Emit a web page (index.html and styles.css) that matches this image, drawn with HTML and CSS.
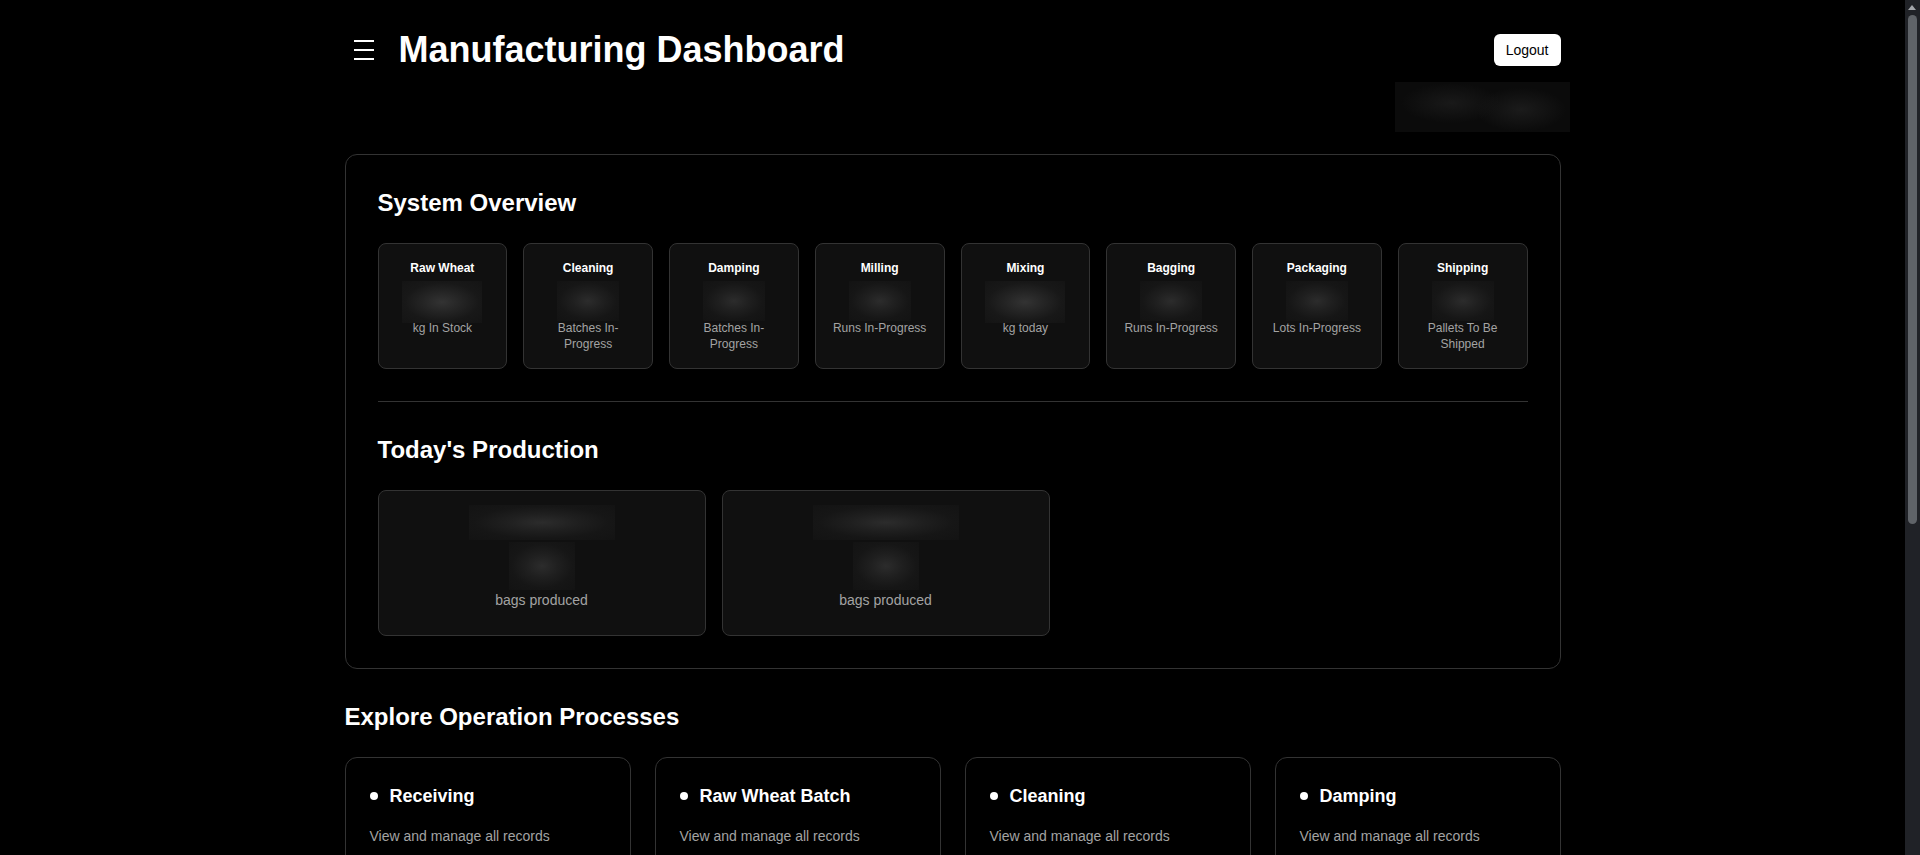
FILE: index.html
```html
<!DOCTYPE html>
<html lang="en">
<head>
    <meta charset="UTF-8">
    <meta name="viewport" content="width=device-width, initial-scale=1.0">
    <title>Manufacturing Dashboard</title>
    <link rel="stylesheet" href="styles.css">
</head>
<body>
    <div class="page">
        <header class="topbar">
            <div class="topbar-left">
                <button class="menu-btn" aria-label="Menu">
                    <svg width="24" height="24" viewBox="0 0 24 24" fill="none" stroke="#fff" stroke-width="2">
                        <path d="M1 3h20M1 12h20M1 21h20"/>
                    </svg>
                </button>
                <h1>Manufacturing Dashboard</h1>
            </div>
            <button class="logout-btn">Logout</button>
        </header>

        <div class="user-row">
            <!-- user info is hidden -->
            <span class="user-blur"></span>
        </div>

        <section class="panel">
            <h2>System Overview</h2>
            <div class="stat-grid">
                <div class="stat-card">
                    <div class="stat-title">Raw Wheat</div>
                    <div class="stat-value"><span class="blur blur-wide"></span></div>
                    <div class="stat-label">kg In Stock</div>
                </div>
                <div class="stat-card">
                    <div class="stat-title">Cleaning</div>
                    <div class="stat-value"><span class="blur"></span></div>
                    <div class="stat-label">Batches In-Progress</div>
                </div>
                <div class="stat-card">
                    <div class="stat-title">Damping</div>
                    <div class="stat-value"><span class="blur"></span></div>
                    <div class="stat-label">Batches In-Progress</div>
                </div>
                <div class="stat-card">
                    <div class="stat-title">Milling</div>
                    <div class="stat-value"><span class="blur"></span></div>
                    <div class="stat-label">Runs In-Progress</div>
                </div>
                <div class="stat-card">
                    <div class="stat-title">Mixing</div>
                    <div class="stat-value"><span class="blur blur-wide"></span></div>
                    <div class="stat-label">kg today</div>
                </div>
                <div class="stat-card">
                    <div class="stat-title">Bagging</div>
                    <div class="stat-value"><span class="blur"></span></div>
                    <div class="stat-label">Runs In-Progress</div>
                </div>
                <div class="stat-card">
                    <div class="stat-title">Packaging</div>
                    <div class="stat-value"><span class="blur"></span></div>
                    <div class="stat-label">Lots In-Progress</div>
                </div>
                <div class="stat-card">
                    <div class="stat-title">Shipping</div>
                    <div class="stat-value"><span class="blur"></span></div>
                    <div class="stat-label">Pallets To Be Shipped</div>
                </div>
            </div>

            <div class="divider"></div>

            <h2>Today's Production</h2>
            <div class="prod-grid">
                <div class="prod-card">
                    <span class="blur prod-name"></span>
                    <span class="blur prod-count"></span>
                    <div class="prod-label">bags produced</div>
                </div>
                <div class="prod-card">
                    <span class="blur prod-name"></span>
                    <span class="blur prod-count"></span>
                    <div class="prod-label">bags produced</div>
                </div>
            </div>
        </section>

        <section class="explore">
            <h2>Explore Operation Processes</h2>
            <div class="process-grid">
                <a class="process-card" href="#">
                    <div class="process-title"><span class="dot"></span>Receiving</div>
                    <p>View and manage all records</p>
                </a>
                <a class="process-card" href="#">
                    <div class="process-title"><span class="dot"></span>Raw Wheat Batch</div>
                    <p>View and manage all records</p>
                </a>
                <a class="process-card" href="#">
                    <div class="process-title"><span class="dot"></span>Cleaning</div>
                    <p>View and manage all records</p>
                </a>
                <a class="process-card" href="#">
                    <div class="process-title"><span class="dot"></span>Damping</div>
                    <p>View and manage all records</p>
                </a>
            </div>
        </section>
    </div>

    <!-- page scrollbar -->
    <div class="scrollbar">
        <span class="arrow-up"></span>
        <span class="thumb"></span>
    </div>
</body>
</html>
```

FILE: styles.css
```css
* {
    margin: 0;
    padding: 0;
    box-sizing: border-box;
}

body {
    font-family: "Liberation Sans", Arial, sans-serif;
    background-color: #000;
    color: #fff;
    padding-right: 15px;
}

.page {
    width: 1216px;
    margin: 0 auto;
    padding-bottom: 48px;
}

/* header */
.topbar {
    display: flex;
    justify-content: space-between;
    align-items: center;
    padding-top: 30px;
    height: 70px;
}

.topbar-left {
    display: flex;
    align-items: center;
    gap: 14px;
}

.menu-btn {
    background: none;
    border: none;
    padding: 8px;
    display: flex;
    cursor: pointer;
}

.topbar h1 {
    font-size: 36px;
    line-height: 40px;
    font-weight: bold;
}

.logout-btn {
    background: #fff;
    color: #000;
    border: none;
    border-radius: 6px;
    font-family: inherit;
    font-size: 14px;
    line-height: 20px;
    padding: 6px 12px;
    cursor: pointer;
}

.user-row {
    display: flex;
    justify-content: flex-end;
    margin-top: 12px;
    margin-right: -9px;
}

.user-blur {
    display: block;
    width: 175px;
    height: 50px;
    background:
        radial-gradient(ellipse 50px 20px at 32% 42%, #191919, transparent),
        radial-gradient(ellipse 45px 22px at 72% 55%, #1b1b1b, transparent),
        #0b0b0b;
}

/* overview panel */
.panel {
    margin-top: 22px;
    border: 1px solid #333;
    border-radius: 12px;
    padding: 32px;
}

.panel h2,
.explore h2 {
    font-size: 24px;
    line-height: 32px;
    font-weight: bold;
    margin-bottom: 24px;
}

.stat-grid {
    display: grid;
    grid-template-columns: repeat(8, 1fr);
    gap: 16px;
}

.stat-card {
    background: #101010;
    border: 1px solid #333;
    border-radius: 8px;
    padding: 16px;
    text-align: center;
}

.stat-title {
    font-size: 12px;
    line-height: 16px;
    font-weight: bold;
}

.stat-value {
    height: 44px;
    padding-top: 5px;
    display: flex;
    justify-content: center;
}

.stat-label {
    font-size: 12px;
    line-height: 16px;
    color: #a3a3a3;
}

.blur {
    display: block;
    width: 62px;
    height: 40px;
    background: radial-gradient(ellipse at center, #2c2c2c 0%, #1f1f1f 35%, #161616 65%, #131313 100%);
}

.blur-wide {
    width: 80px;
    height: 42px;
    background: radial-gradient(ellipse at center, #333 0%, #242424 35%, #181818 65%, #141414 100%);
}

.divider {
    height: 1px;
    background: #333;
    margin: 32px 0;
}

.prod-grid {
    display: grid;
    grid-template-columns: repeat(2, 328px);
    gap: 16px;
}

.prod-card {
    background: #101010;
    border: 1px solid #333;
    border-radius: 8px;
    padding: 14px 24px 25px;
    display: flex;
    flex-direction: column;
    align-items: center;
}

.prod-name {
    width: 146px;
    height: 35px;
    margin-bottom: 2px;
}

.prod-count {
    width: 66px;
    height: 48px;
}

.prod-label {
    font-size: 14px;
    line-height: 20px;
    color: #a3a3a3;
}

/* explore */
.explore {
    margin-top: 32px;
}

.process-grid {
    display: grid;
    grid-template-columns: repeat(4, 1fr);
    gap: 24px;
}

.process-card {
    display: block;
    border: 1px solid #333;
    border-radius: 12px;
    padding: 24px;
    color: #fff;
    text-decoration: none;
}

.process-title {
    display: flex;
    align-items: center;
    gap: 12px;
    font-size: 18px;
    line-height: 28px;
    font-weight: bold;
    margin-bottom: 16px;
}

.dot {
    width: 8px;
    height: 8px;
    border-radius: 50%;
    background: #fff;
}

.process-card p {
    font-size: 14px;
    line-height: 20px;
    color: #a3a3a3;
}

/* scrollbar */
.scrollbar {
    position: fixed;
    top: 0;
    right: 0;
    width: 15px;
    height: 100vh;
    background: #202227;
}

.arrow-up {
    position: absolute;
    top: 5px;
    left: 3px;
    border-left: 4.5px solid transparent;
    border-right: 4.5px solid transparent;
    border-bottom: 5px solid #a3a6ab;
}

.thumb {
    position: absolute;
    top: 15px;
    left: 3px;
    width: 9px;
    height: 509px;
    border-radius: 5px;
    background: #5f6368;
}
```
